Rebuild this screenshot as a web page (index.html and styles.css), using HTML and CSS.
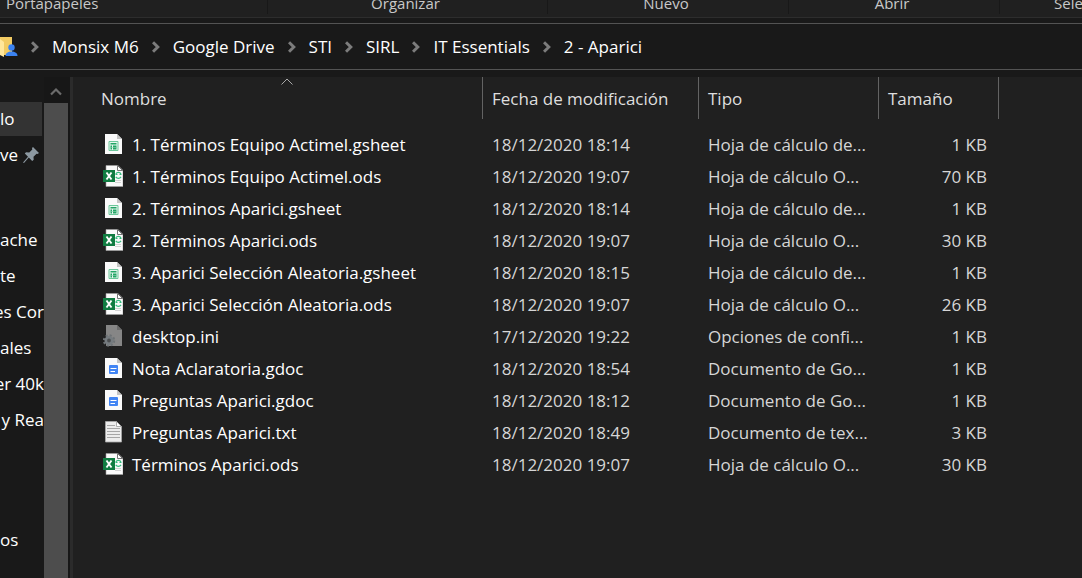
FILE: index.html
```html
<!DOCTYPE html>
<html lang="es">
<head>
<meta charset="utf-8">
<meta name="viewport" content="width=device-width, initial-scale=1">
<title>2 - Aparici</title>
<link rel="stylesheet" href="styles.css">
</head>
<body>
<svg class="defs" aria-hidden="true">
  <symbol id="chev" viewBox="0 0 8 12"><path d="M1 1.200 5.800 6 1 10.800" fill="none" stroke="#7c7c7c" stroke-width="3"/></symbol>
  <symbol id="sheet" viewBox="0 0 20 24">
    <path d="M2 1h12l5 5v15H2z" fill="#fafafa"/><path d="M14 1v5h5z" fill="#c4c4c4"/>
    <path d="M6 8.500h9v9H6z" fill="#e6f6ee" stroke="#6cc79a"/>
    <path d="M7.500 10h6v1.500h-6zM7.500 12.500h1.500v4H7.500zM10 12.500h3.500v4H10z" fill="#23a566"/>
    <path d="M7.500 14.500h6" stroke="#8fd4b1" stroke-width=".6"/>
  </symbol>
  <symbol id="doc" viewBox="0 0 20 24">
    <path d="M2 1h12l5 5v15H2z" fill="#fafafa"/><path d="M14 1v5h5z" fill="#c4c4c4"/>
    <rect x="6" y="8" width="9" height="9" rx="1" fill="#4285f4"/>
    <path d="M7.500 11.500h6M7.500 14.500h4.500" stroke="#fff" stroke-width="1.200"/>
  </symbol>
  <symbol id="txt" viewBox="0 0 20 24">
    <path d="M2.500 .5h11l5 5v15.500h-16z" fill="#ececec" stroke="#a9a9a9" stroke-width=".8"/><path d="M13.500 .5v5h5z" fill="#fff" stroke="#999" stroke-width=".8"/>
    <path d="M4 4.500h8M4 7.500h13M4 10.500h13M4 13.500h13M4 16.500h13" stroke="#a6a6a6" stroke-width="1.100"/>
  </symbol>
  <symbol id="ini" viewBox="0 0 20 24">
    <path d="M3 0h11l5 5v16H3z" fill="#868686"/><path d="M14 0v5h5z" fill="#6b6b6b"/>
    <circle cx="6" cy="15.500" r="5" fill="none" stroke="#6d7275" stroke-width="2.400" stroke-dasharray="2 1.930"/>
    <circle cx="6" cy="15.500" r="3.200" fill="#4c4f51" stroke="#757b7f" stroke-width="2.600"/>
  </symbol>
  <symbol id="ods" viewBox="0 0 20 24">
    <path d="M3 .5h12l5 5v16H3z" fill="#fafafa" stroke="#a0a0a0" stroke-width=".6"/><path d="M14.500 .5v5h5z" fill="#fff" stroke="#666" stroke-width=".9"/>
    <path d="M12.800 8.800c1.200-2 4-2 5.200 0M12.800 11.800c1.200 2 4 2 5.200 0" fill="none" stroke="#35bd7e" stroke-width="1.300"/>
    <path d="M12.500 9.500h2M16.500 9.500h2" stroke="#35bd7e" stroke-width="1"/><path d="M12 15.500h6M12 17.500h6" stroke="#cfcfcf" stroke-width=".9"/>
    <path d="M0 5h12v12H0z" fill="#107c41"/><path d="m3.500 7.500 5 7m0-7-5 7" stroke="#fff" stroke-width="1.900"/>
  </symbol>
</svg>

<header class="ribbon">
  <span class="group first">Portapapeles</span>
  <span class="group">Organizar</span>
  <span class="group">Nuevo</span>
  <span class="group">Abrir</span>
  <span class="group last">Seleccionar</span>
</header>

<div class="address">
  <nav class="crumbs" aria-label="Ruta">
    <svg class="folder" viewBox="0 0 18 20" aria-hidden="true">
      <path d="M0 0h12v18H0z" fill="#f2cb63"/><path d="M0 2l4 3v15l-4-2z" fill="#ffe69b"/>
      <path d="M5.500 19c0-3 2.500-4.500 6-4.500s6 1.500 6 4.500z" fill="#3b82f0"/><circle cx="11.500" cy="10.500" r="3.200" fill="#3b82f0"/>
    </svg>
    <svg class="chev" aria-hidden="true"><use href="#chev"/></svg><a href="#">Monsix M6</a>
    <svg class="chev" aria-hidden="true"><use href="#chev"/></svg><a href="#">Google Drive</a>
    <svg class="chev" aria-hidden="true"><use href="#chev"/></svg><a href="#">STI</a>
    <svg class="chev" aria-hidden="true"><use href="#chev"/></svg><a href="#">SIRL</a>
    <svg class="chev" aria-hidden="true"><use href="#chev"/></svg><a href="#">IT Essentials</a>
    <svg class="chev" aria-hidden="true"><use href="#chev"/></svg><a href="#">2 - Aparici</a>
  </nav>
</div>

<div class="main">
  <nav class="tree" aria-label="Panel de navegación">
    <div class="tree-group">
      <a href="#" class="current">lo</a>
      <a href="#">ve
        <svg class="pin" viewBox="0 0 16 16" aria-hidden="true"><path d="M10 0l6 6-1.500 1-1-.3-3 3 .2 3-1.500 1.300-3.400-3.400L1 16l-1-.5 5-5.800L1.800 6.500 3 5.200l3.300.2 3-3L9 1z" fill="#8d99a2"/></svg>
      </a>
    </div>
    <div class="tree-group">
      <a href="#">ache</a>
      <a href="#">te</a>
      <a href="#" class="cut">es Cor</a>
      <a href="#">ales</a>
      <a href="#" class="cut">er 40k</a>
      <a href="#" class="cut">r y Rea</a>
    </div>
    <div class="tree-group tail">
      <a href="#">os</a>
    </div>
  </nav>
  <div class="scroll">
    <button type="button" class="up" aria-label="Subir"><svg viewBox="0 0 12 9" aria-hidden="true"><path d="M1 7.500 6 2.500l5 5" fill="none" stroke="#6c6c6c" stroke-width="2.200"/></svg></button>
    <div class="thumb"></div>
  </div>
  <main class="files">
    <table>
      <colgroup><col class="c-name"><col class="c-date"><col class="c-type"><col class="c-size"></colgroup>
      <thead>
        <tr>
          <th scope="col" aria-sort="ascending"><div class="head">Nombre<svg class="sort" viewBox="0 0 12 7" aria-hidden="true"><path d="M.5 6.500 6 1l5.500 5.500" fill="none" stroke="#a8a8a8"/></svg></div></th>
          <th scope="col"><div class="head">Fecha de modificación</div></th>
          <th scope="col"><div class="head">Tipo</div></th>
          <th scope="col"><div class="head">Tamaño</div></th>
        </tr>
      </thead>
      <tbody>
        <tr><td><div class="name"><svg aria-hidden="true"><use href="#sheet"/></svg>1. Términos Equipo Actimel.gsheet</div></td><td>18/12/2020 18:14</td><td>Hoja de cálculo de...</td><td>1 KB</td></tr>
        <tr><td><div class="name"><svg aria-hidden="true"><use href="#ods"/></svg>1. Términos Equipo Actimel.ods</div></td><td>18/12/2020 19:07</td><td>Hoja de cálculo O...</td><td>70 KB</td></tr>
        <tr><td><div class="name"><svg aria-hidden="true"><use href="#sheet"/></svg>2. Términos Aparici.gsheet</div></td><td>18/12/2020 18:14</td><td>Hoja de cálculo de...</td><td>1 KB</td></tr>
        <tr><td><div class="name"><svg aria-hidden="true"><use href="#ods"/></svg>2. Términos Aparici.ods</div></td><td>18/12/2020 19:07</td><td>Hoja de cálculo O...</td><td>30 KB</td></tr>
        <tr><td><div class="name"><svg aria-hidden="true"><use href="#sheet"/></svg>3. Aparici Selección Aleatoria.gsheet</div></td><td>18/12/2020 18:15</td><td>Hoja de cálculo de...</td><td>1 KB</td></tr>
        <tr><td><div class="name"><svg aria-hidden="true"><use href="#ods"/></svg>3. Aparici Selección Aleatoria.ods</div></td><td>18/12/2020 19:07</td><td>Hoja de cálculo O...</td><td>26 KB</td></tr>
        <tr><td><div class="name"><svg aria-hidden="true"><use href="#ini"/></svg>desktop.ini</div></td><td>17/12/2020 19:22</td><td>Opciones de confi...</td><td>1 KB</td></tr>
        <tr><td><div class="name"><svg aria-hidden="true"><use href="#doc"/></svg>Nota Aclaratoria.gdoc</div></td><td>18/12/2020 18:54</td><td>Documento de Go...</td><td>1 KB</td></tr>
        <tr><td><div class="name"><svg aria-hidden="true"><use href="#doc"/></svg>Preguntas Aparici.gdoc</div></td><td>18/12/2020 18:12</td><td>Documento de Go...</td><td>1 KB</td></tr>
        <tr><td><div class="name"><svg aria-hidden="true"><use href="#txt"/></svg>Preguntas Aparici.txt</div></td><td>18/12/2020 18:49</td><td>Documento de tex...</td><td>3 KB</td></tr>
        <tr><td><div class="name"><svg aria-hidden="true"><use href="#ods"/></svg>Términos Aparici.ods</div></td><td>18/12/2020 19:07</td><td>Hoja de cálculo O...</td><td>30 KB</td></tr>
      </tbody>
    </table>
  </main>
</div>
</body>
</html>
```

FILE: styles.css
```css
* { box-sizing: border-box; }

body {
  margin: 0;
  height: 100vh;
  display: flex;
  flex-direction: column;
  overflow: hidden;
  background: #191919;
  color: #fff;
  font: 17px/24px "Open Sans", "Noto Sans", sans-serif;
}

a { color: inherit; text-decoration: none; }
svg { display: block; flex: none; }
.defs { width: 0; height: 0; position: absolute; }

/* Ribbon */
.ribbon {
  flex: none;
  height: 18px;
  display: grid;
  grid-template-columns: 268px 280px 241px 211px 1fr;
  padding-bottom: 4px;
  background: #202020;
  border-bottom: 1px solid #2d2d2d;
  color: #c8c8c8;
  font-size: 15px;
  line-height: 22px;
}
.group {
  height: 14px;
  display: flex;
  justify-content: center;
  align-items: flex-end;
  overflow: hidden;
  padding-right: 4px;
  border-right: 1px solid #181818;
}
.group.first { justify-content: flex-start; padding-left: 6px; }
.group.last { justify-content: flex-start; padding: 0 0 0 54px; border: 0; }

/* Address bar */
.address { flex: none; padding: 5px 0 7px; }
.crumbs {
  height: 47px;
  display: flex;
  align-items: center;
  gap: 13px;
  border-top: 1px solid #535353;
  border-bottom: 1px solid #535353;
  white-space: nowrap;
}
.folder { width: 18px; height: 20px; }
.chev { width: 8px; height: 12px; }

/* Navigation pane */
.main { flex: 1; min-height: 0; display: flex; }
.tree {
  flex: none;
  width: 44px;
  padding-top: 25px;
  overflow: hidden;
  white-space: nowrap;
}
.tree-group { display: grid; gap: 2px; margin-bottom: 51px; }
.tree-group.tail { margin-top: 86px; }
.tree-group:has(+ .tail) { margin-bottom: 0; }
.tree a {
  width: 44px;
  height: 34px;
  display: flex;
  align-items: center;
  gap: 5px;
  overflow: hidden;
}
.tree .current { width: 42px; background: #333; }
.tree .cut { justify-content: flex-end; }
.pin { width: 16px; height: 16px; }

.scroll {
  flex: none;
  width: 26px;
  padding-right: 2px;
  display: flex;
  flex-direction: column;
  background: #171717;
}
.up {
  height: 26px;
  padding: 2px 0 0;
  border: 0;
  background: none;
  display: grid;
  place-items: center;
}
.up svg { width: 12px; height: 9px; }
.thumb { flex: 1; background: #4d4d4d; }

/* File list */
.files {
  flex: 1;
  min-width: 0;
  padding-left: 19px;
  overflow: hidden;
  background: #202020;
  border-left: 3px solid #2b2b2b;
}
table { table-layout: fixed; width: 907px; border-collapse: collapse; }
.c-name { width: 391px; }
.c-date { width: 216px; }
.c-type { width: 180px; }
.c-size { width: 120px; }
th { padding: 0 0 10px; font-weight: 400; text-align: left; color: #dedede; }
.head {
  position: relative;
  height: 42px;
  padding: 10px 9px 0;
  border-right: 1px solid #636363;
  white-space: nowrap;
}
.sort { position: absolute; top: 1px; left: 50%; width: 12px; height: 7px; margin-left: -6px; }
td { height: 32px; padding: 0 9px; color: #d6d6d6; white-space: nowrap; }
td:first-child { color: #fff; }
td:last-child { padding-right: 12px; text-align: right; }
.name { display: flex; align-items: center; gap: 9px; padding-left: 2px; }
.name svg { width: 20px; height: 24px; }
```
